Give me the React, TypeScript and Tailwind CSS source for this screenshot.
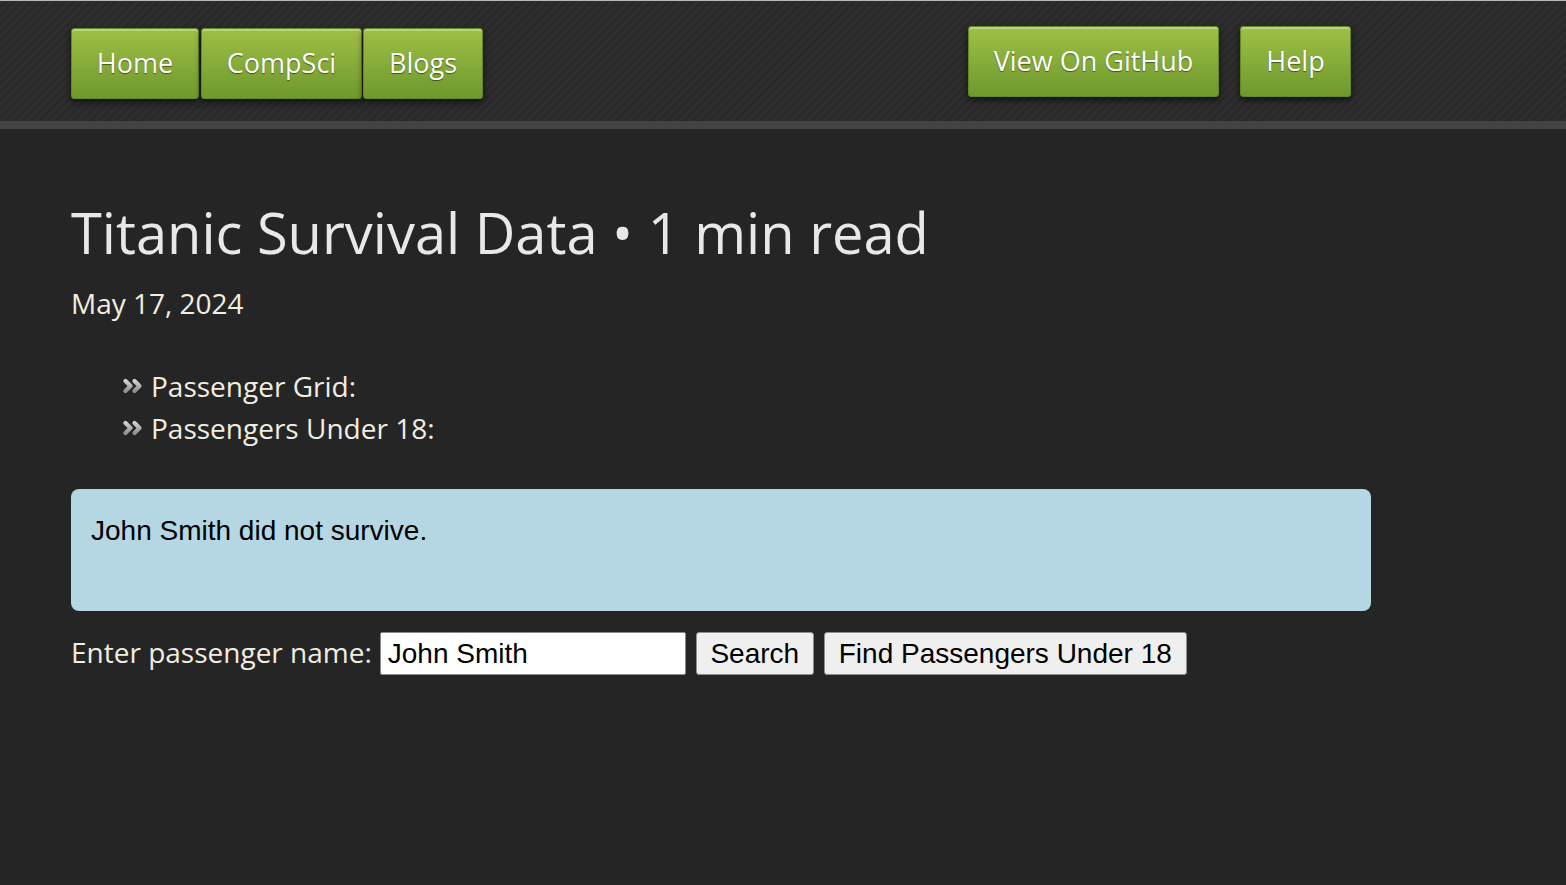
import React from "react";

const navBtn =
  "relative flex items-center justify-center whitespace-nowrap h-[71px] rounded-[3px] border border-[#5f8a24] bg-[linear-gradient(to_bottom,#9fbf46_0%,#86ac39_50%,#6e992c_100%)] shadow-[0_3px_6px_rgba(0,0,0,0.6),inset_0_2px_0_rgba(255,255,255,0.3)] text-white text-[27px] [text-shadow:0_1px_1px_rgba(0,0,0,0.5)] font-['Open_Sans',sans-serif]";

function Chevrons() {
  return (
    <svg width="20" height="16" viewBox="0 0 20 16" className="mr-[8px]">
      <defs>
        <linearGradient id="cg" x1="0" y1="0" x2="0" y2="1">
          <stop offset="0" stopColor="#d0d0d0" />
          <stop offset="1" stopColor="#909090" />
        </linearGradient>
      </defs>
      <path d="M2.5 3 L7.5 8 L2.5 13" stroke="url(#cg)" strokeWidth="4.2" fill="none" strokeLinecap="round" strokeLinejoin="round" />
      <path d="M11.5 3 L16.5 8 L11.5 13" stroke="url(#cg)" strokeWidth="4.2" fill="none" strokeLinecap="round" strokeLinejoin="round" />
    </svg>
  );
}

const formFont = "text-[28px] text-black font-['Liberation_Sans',Arial,sans-serif]";

export default function App() {
  return (
    <div className="min-h-[885px] bg-[#252525] font-['Open_Sans',sans-serif]">
      <header className="border-t border-t-[#b9b9b9] border-b-[8px] border-b-[#434343] h-[129px] bg-[#2c2c2c] bg-[repeating-linear-gradient(135deg,#2e2e2e_0px,#2e2e2e_3px,#292929_3px,#292929_6px)]">
        <div className="flex justify-between pl-[71px] w-[1351px]">
          <nav className="flex gap-[1px] mt-[27px]">
            <a className={navBtn + " w-[128px] mr-[1px]"}>Home</a>
            <a className={navBtn + " w-[161px]"}>CompSci</a>
            <a className={navBtn + " w-[120px]"}>Blogs</a>
          </nav>
          <div className="flex gap-[21px] mt-[25px]">
            <a className={navBtn + " w-[251px]"}>View On GitHub</a>
            <a className={navBtn + " w-[111px]"}>Help</a>
          </div>
        </div>
      </header>
      <main className="pl-[71px] w-[1371px]">
        <h1 className="mt-[63px] text-[56px] leading-[80px] text-[#e8e8e8]">
          Titanic Survival Data • 1 min read
        </h1>
        <p className="mt-[12px] text-[28px] leading-[38px] text-[#f1ede0]">May 17, 2024</p>
        <ul className="mt-[43px] pl-[52px] text-[28px] leading-[42px] text-[#f1ede0]">
          <li className="flex items-center">
            <Chevrons />
            Passenger Grid:
          </li>
          <li className="flex items-center">
            <Chevrons />
            Passengers Under 18:
          </li>
        </ul>
        <div className={"mt-[40px] h-[122px] rounded-[8px] bg-[#b4d7e3] px-[20px] pt-[26px] leading-[32px] " + formFont}>
          John Smith did not survive.
        </div>
        <div className="mt-[21px] flex items-center text-[28px] text-[#f1ede0]">
          <label className="mr-[8px] -mt-[4px]">Enter passenger name:</label>
          <input
            defaultValue="John Smith"
            className={"w-[306px] h-[43px] bg-white border border-[#8a8a8a] rounded-[2px] px-[7px] outline-none " + formFont}
          />
          <button className={"ml-[10px] h-[43px] w-[118px] bg-[#efefef] border border-[#8f8f8f] rounded-[3px] " + formFont}>
            Search
          </button>
          <button className={"ml-[10px] h-[43px] w-[363px] bg-[#efefef] border border-[#8f8f8f] rounded-[3px] whitespace-nowrap " + formFont}>
            Find Passengers Under 18
          </button>
        </div>
      </main>
    </div>
  );
}
